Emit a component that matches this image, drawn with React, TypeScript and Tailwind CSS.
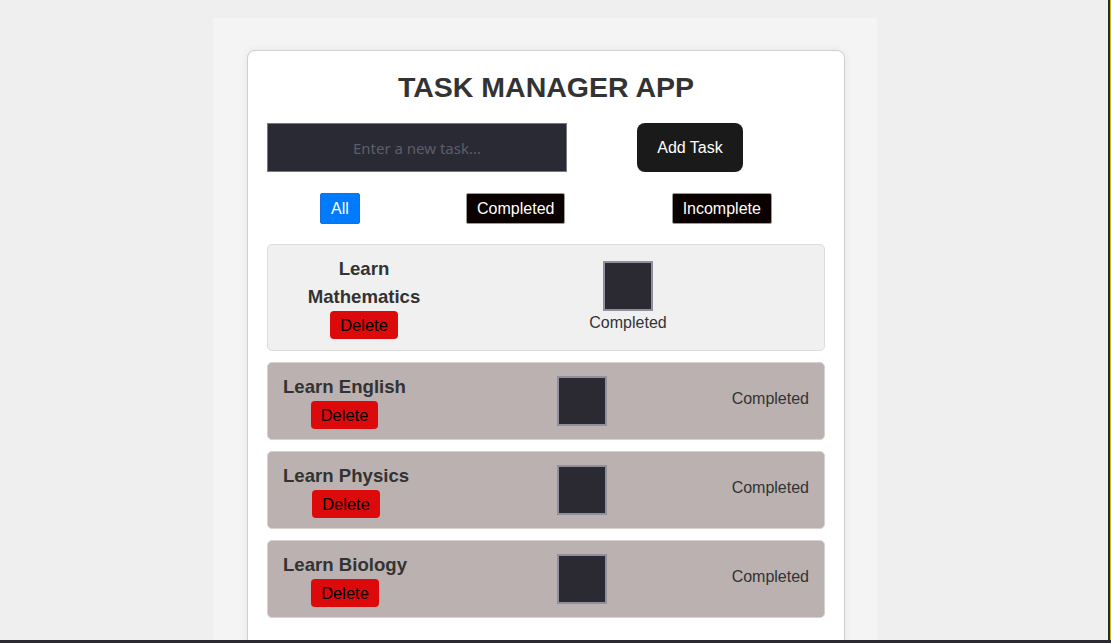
const TASKS = ["Learn English", "Learn Physics", "Learn Biology"];

function Box() {
  return <div className="h-[50px] w-[50px] border-2 border-[#8f8f9d] bg-[#2b2a33]" />;
}

function DeleteBtn() {
  return (
    <button className="h-[28px] rounded-[4px] bg-[#dc0a0a] px-[10px] text-[16.5px] leading-none text-black">
      Delete
    </button>
  );
}

export default function App() {
  return (
    <div className="flex h-[643px] w-[1111px] flex-col overflow-hidden bg-[#efefef] font-['Liberation_Sans',Arial,sans-serif]">
      <div className="flex min-h-0 flex-1">
        <div className="min-w-0 flex-1 overflow-hidden">
          {/* page panel */}
          <div className="ml-[213px] mt-[18px] h-[700px] w-[664px] bg-[#f4f4f4] pt-[32px]">
            <div className="ml-[34px] w-[598px] rounded-[8px] border border-[#cfcfcf] bg-white px-[19px] pt-[20px] pb-[40px] shadow-[0_0_8px_rgba(0,0,0,0.06)]">
              <h1 className="text-center text-[28.5px] font-bold leading-[32px] text-[#333]">TASK MANAGER APP</h1>

              <div className="mt-[20px] flex items-center">
                <input
                  placeholder="Enter a new task..."
                  className="h-[49px] w-[300px] border border-[#77778a] bg-[#2a2a35] text-center font-['Noto_Sans',sans-serif] text-[15px] text-white outline-none placeholder:text-[#5d5d6a]"
                />
                <button className="ml-[70px] h-[49px] w-[106px] rounded-[8px] bg-[#1a1a1a] text-[16px] text-white">
                  Add Task
                </button>
              </div>

              <div className="mt-[21px] flex justify-around">
                <button className="h-[31px] rounded-[2px] border border-[#1a6fd0] bg-[#007bff] px-[10px] text-[16px] text-white">
                  All
                </button>
                <button className="h-[31px] rounded-[2px] border border-[#9a9a9a] bg-[#0a0000] px-[10px] text-[16px] text-white">
                  Completed
                </button>
                <button className="h-[31px] rounded-[2px] border border-[#9a9a9a] bg-[#0a0000] px-[10px] text-[16px] text-white">
                  Incomplete
                </button>
              </div>

              <ul className="mt-[20px] flex flex-col gap-[11px]">
                <li className="flex items-center rounded-[5px] border border-[#dcdcdc] bg-[#f0f0f0] px-[15px] pt-[10px] pb-[11px]">
                  <div className="flex w-[162px] flex-col items-center">
                    <span className="text-center text-[18.6px] font-bold leading-[28px] text-[#333]">
                      Learn
                      <br />
                      Mathematics
                    </span>
                    <DeleteBtn />
                  </div>
                  <div className="-mt-[2px] ml-[144px] flex w-[78px] flex-col items-center">
                    <Box />
                    <span className="mt-[3px] text-[16px] leading-[18px] text-[#333]">Completed</span>
                  </div>
                </li>

                {TASKS.map((t) => (
                  <li
                    key={t}
                    className="grid grid-cols-[274px_50px_1fr] items-center rounded-[5px] border border-[#d6d0cf] bg-[#bab1b0] px-[15px] pt-[10px] pb-[10px]"
                  >
                    <div className="flex">
                      <div className="flex flex-col items-center">
                        <span className="text-[18.6px] font-bold leading-[28px] text-[#333]">{t}</span>
                        <DeleteBtn />
                      </div>
                    </div>
                    <Box />
                    <span className="-mt-[4px] text-right text-[16px] text-[#333]">Completed</span>
                  </li>
                ))}
              </ul>
            </div>
          </div>
        </div>
        <div className="w-[2px] bg-[#2a2a33]" />
        <div className="w-[1px] bg-[#d6b800]" />
      </div>
      <div className="h-[3px] bg-[#2a2a33]" />
    </div>
  );
}
